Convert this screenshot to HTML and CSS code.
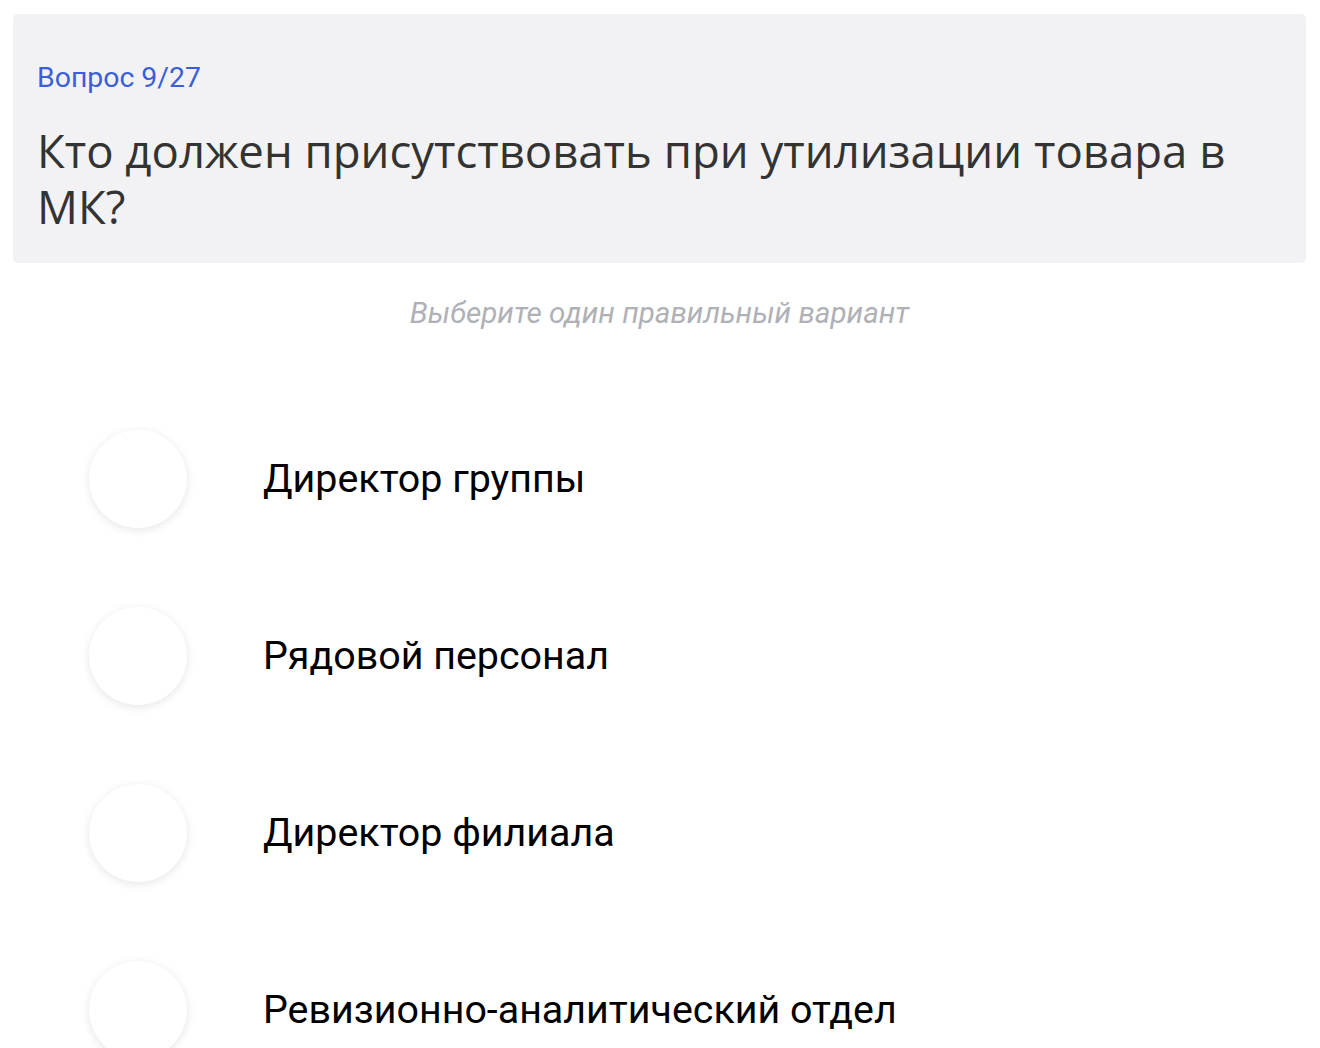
FILE: index.html
```html
<!DOCTYPE html>
<html lang="ru">
<head>
<meta charset="utf-8">
<link rel="stylesheet" href="styles.css">
</head>
<body>
<div class="page">
  <div class="card">
    <div class="counter">Вопрос 9/27</div>
    <div class="question">Кто должен присутствовать при утилизации товара в МК?</div>
  </div>
  <div class="hint">Выберите один правильный вариант</div>
  <div class="options">
    <div class="option"><span class="radio"></span><span class="label">Директор группы</span></div>
    <div class="option"><span class="radio"></span><span class="label">Рядовой персонал</span></div>
    <div class="option"><span class="radio"></span><span class="label">Директор филиала</span></div>
    <div class="option"><span class="radio"></span><span class="label">Ревизионно-аналитический отдел</span></div>
  </div>
</div>
</body>
</html>
```
FILE: styles.css
```css
html, body {
  margin: 0;
  padding: 0;
  background: #ffffff;
}
body {
  font-family: Roboto, "Noto Sans", sans-serif;
  overflow: hidden;
  height: 1048px;
}
.page {
  padding: 14px 14px 0 13px;
}
.card {
  background: #f2f2f4;
  border-radius: 5px;
  padding: 48px 24px 29px 24px;
}
.counter {
  color: #3a5fd6;
  font-size: 28.4px;
  line-height: 32px;
}
.question {
  font-family: "Open Sans", "Noto Sans", sans-serif;
  color: #333333;
  font-size: 45.5px;
  line-height: 56px;
  margin-top: 28px;
}
.hint {
  text-align: center;
  color: #afb1b7;
  font-style: italic;
  font-size: 29.6px;
  line-height: 34px;
  margin-top: 33px;
}
.options {
  display: flex;
  flex-direction: column;
  gap: 79px;
  padding-left: 76px;
  margin-top: 100px;
}
.option {
  display: flex;
  align-items: center;
  gap: 76px;
}
.radio {
  width: 98px;
  height: 98px;
  border-radius: 50%;
  background: #fff;
  box-shadow: 0 2px 10px rgba(0, 0, 0, 0.1);
  flex: none;
}
.label {
  color: #000;
  font-size: 39.4px;
  line-height: 46px;
}
```
